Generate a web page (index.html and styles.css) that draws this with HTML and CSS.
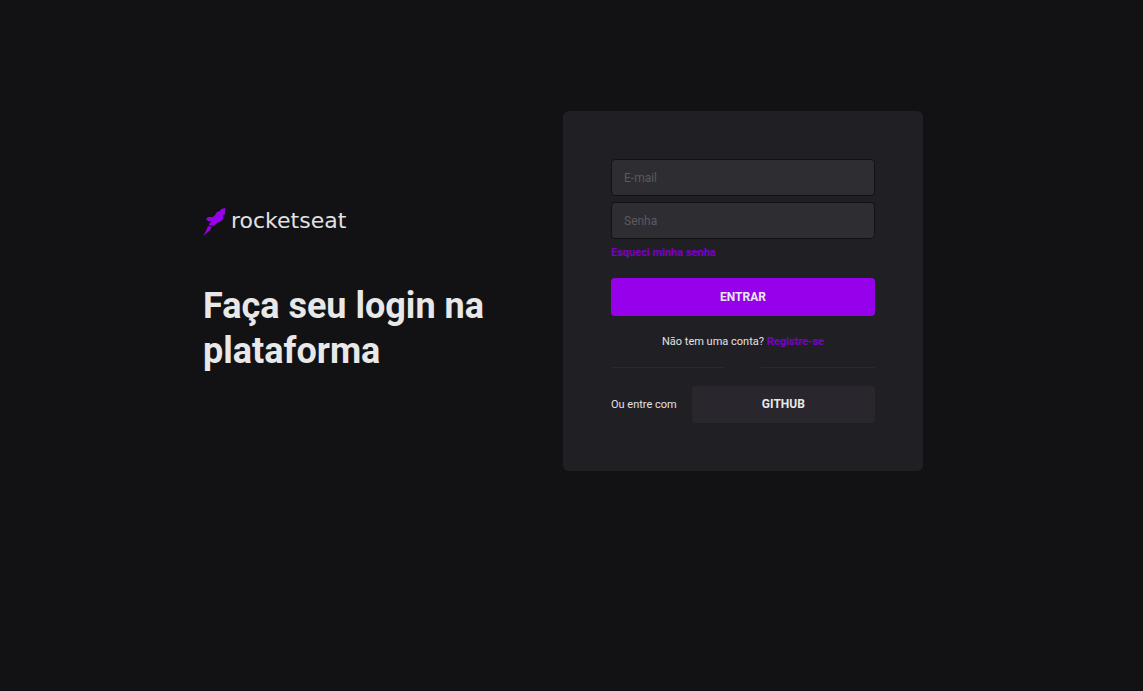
FILE: index.html
```html
<!DOCTYPE html>
<html lang="pt-BR">
<head>
<meta charset="utf-8">
<meta name="viewport" content="width=device-width, initial-scale=1">
<title>Rocketseat | Login</title>
<link rel="stylesheet" href="styles.css">
</head>
<body>
<main class="page">
  <section class="intro">
    <div class="logo">
      <svg class="logo-mark" viewBox="0 0 24 28" aria-hidden="true">
        <path d="M22 0 18 1 17 3 14 4 12 7 10 9 5 9 3 11 5 13 8 13 7 16 11 18 14 15 17 14 20 11 20 8 22 6Z"/>
        <path d="M6 15 10 17 8 18 6 17ZM5 18 9 19 6 23 0 28 3 23Z"/>
      </svg>
      <span class="logo-name">rocketseat</span>
    </div>
    <h1 class="title">Faça seu login na plataforma</h1>
  </section>
  <form class="card">
    <div class="fields">
      <input class="field" type="email" placeholder="E-mail" aria-label="E-mail">
      <input class="field" type="password" placeholder="Senha" aria-label="Senha">
    </div>
    <a class="link forgot" href="#">Esqueci minha senha</a>
    <button class="button" type="submit">ENTRAR</button>
    <p class="note register">Não tem uma conta? <a class="link" href="#">Registre-se</a></p>
    <div class="divider"></div>
    <div class="social">
      <span class="note">Ou entre com</span>
      <button class="button button-dark" type="button">GITHUB</button>
    </div>
  </form>
</main>
</body>
</html>
```

FILE: styles.css
```css
* {
  box-sizing: border-box;
  margin: 0;
}

body {
  background: #121214;
  color: #e1e1e6;
  font-family: Roboto, "Liberation Sans", sans-serif;
}

.page {
  min-height: 100vh;
  padding: 0 17px 109px 0;
  display: grid;
  grid-template-columns: minmax(0, 360px) minmax(0, 360px);
  justify-content: center;
  align-content: center;
  align-items: center;
}

.logo {
  display: flex;
  align-items: flex-start;
  gap: 4px;
  height: 28px;
}

.logo-mark {
  width: 24px;
  height: 28px;
  fill: #9600eb;
}

.logo-name {
  font: 22px/26px "DejaVu Sans", sans-serif;
}

.title {
  margin-top: 48px;
  max-width: 300px;
  color: #e8e8e8;
  font-size: 36px;
  font-weight: 700;
  line-height: 45px;
}

.card {
  padding: 48px;
  display: flex;
  flex-direction: column;
  background: #202024;
  border-radius: 6px;
}

.fields {
  display: grid;
  gap: 6px;
}

.field {
  width: 100%;
  height: 37px;
  padding: 0 12px;
  border: 1px solid #121214;
  border-radius: 4px;
  background: #2e2d31;
  color: #e1e1e6;
  font: 12px/18px Roboto, sans-serif;
}

.field::placeholder {
  color: #5b5a60;
}

.link {
  color: #7a00c4;
  font-size: 11px;
  font-weight: 700;
  line-height: 16px;
  text-decoration: none;
}

.forgot {
  align-self: flex-start;
  margin-top: 6px;
}

.button {
  height: 38px;
  margin-top: 17px;
  border: 0;
  border-radius: 4px;
  background: #9600eb;
  color: #e8e8e8;
  font: 700 12px/18px Roboto, sans-serif;
}

.note {
  font-size: 11px;
  line-height: 16px;
}

.register {
  margin-top: 18px;
  text-align: center;
}

.divider {
  height: 1px;
  margin: 17px 0 18px;
  background: linear-gradient(to right, #29292e 43%, transparent 43% 57%, #29292e 57%);
}

.social {
  display: flex;
  align-items: center;
  gap: 15px;
}

.button-dark {
  flex: 1;
  height: 37px;
  margin-top: 0;
  padding: 0 0 2px;
  background: #29262d;
}
```
